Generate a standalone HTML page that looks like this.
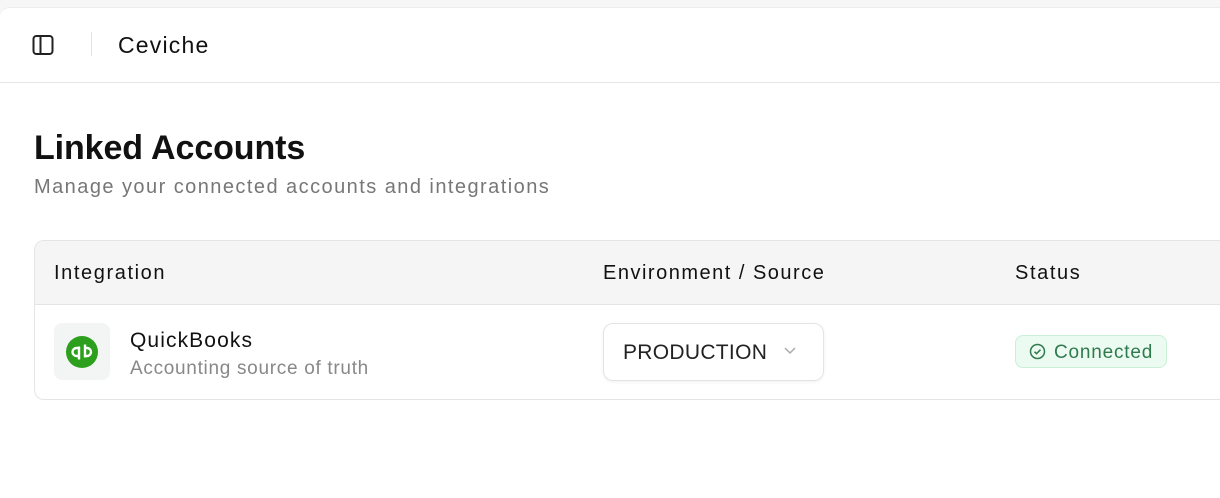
<!DOCTYPE html>
<html><head><style>
body{margin:0;width:1220px;height:484px;overflow:hidden;background:#f6f6f6;font-family:"Liberation Sans",sans-serif;color:#111}
.panel{position:absolute;left:0;top:7px;width:1240px;height:490px;background:#fff;border-top-left-radius:10px;border-top:1px solid #ececec}
.hdr{position:absolute;left:0;top:7px;width:1220px;height:75px;border-bottom:1px solid #e6e6e6}
.t{position:absolute;white-space:nowrap}
.table{position:absolute;left:34px;top:240px;width:1210px;height:158px;border:1px solid #e5e5e5;border-radius:10px;overflow:hidden}
.th{height:63px;background:#f5f5f5;border-bottom:1px solid #e5e5e5}
</style></head><body>
<div class="panel"></div>
<div class="hdr"></div>
<svg class="t" style="left:32px;top:34px" width="22" height="22" viewBox="0 0 22 22"><rect x="1.5" y="2" width="19" height="18" rx="3" fill="none" stroke="#222" stroke-width="2"/><line x1="8.5" y1="2" x2="8.5" y2="20" stroke="#222" stroke-width="2"/></svg>
<div class="t" style="left:91px;top:32px;width:1px;height:24px;background:#e3e3e3"></div>
<div class="t" style="left:118px;top:32px;font-size:23px;letter-spacing:1.2px;color:#111">Ceviche</div>
<div class="t" style="left:34px;top:129px;font-size:34px;font-weight:bold;letter-spacing:-0.1px">Linked Accounts</div>
<div class="t" style="left:34px;top:176px;font-size:20px;letter-spacing:1.45px;color:#777">Manage your connected accounts and integrations</div>
<div class="table"><div class="th"></div></div>
<div class="t" style="left:54px;top:262px;font-size:20px;letter-spacing:1.6px">Integration</div>
<div class="t" style="left:603px;top:262px;font-size:20px;letter-spacing:1.5px">Environment / Source</div>
<div class="t" style="left:1015px;top:262px;font-size:20px;letter-spacing:1.6px">Status</div>
<div class="t" style="left:54px;top:323px;width:56px;height:57px;background:#f3f4f4;border-radius:8px"></div>
<svg class="t" style="left:66px;top:336px" width="32" height="32" viewBox="0 0 32 32"><circle cx="16" cy="16" r="16" fill="#2ca01c"/><path d="M13 10.5v13M13 12h-2.5a4 4 0 0 0 0 8H12M19 8.5v13M19 12h2a4 4 0 0 1 0 8h-1.5" stroke="#fff" stroke-width="2.4" fill="none"/></svg>
<div class="t" style="left:130px;top:329px;font-size:21px;letter-spacing:1.1px">QuickBooks</div>
<div class="t" style="left:130px;top:358px;font-size:19px;letter-spacing:0.7px;color:#888">Accounting source of truth</div>
<div class="t" style="left:603px;top:323px;width:219px;height:56px;border:1px solid #e4e4e4;border-radius:10px;box-shadow:0 1px 3px rgba(0,0,0,.06)"></div>
<div class="t" style="left:623px;top:341px;font-size:21px;letter-spacing:0.3px;color:#222">PRODUCTION</div>
<svg class="t" style="left:783px;top:346px" width="14" height="10" viewBox="0 0 14 10"><path d="M2 2l5 5 5-5" stroke="#aaa" stroke-width="1.5" fill="none"/></svg>
<div class="t" style="left:1015px;top:335px;width:150px;height:31px;background:#ecfbf1;border:1px solid #c9f0d6;border-radius:8px"></div>
<svg class="t" style="left:1029px;top:343px" width="17" height="17" viewBox="0 0 17 17"><circle cx="8.5" cy="8.5" r="7" fill="none" stroke="#2f7a4e" stroke-width="1.5"/><path d="M5.5 8.7l2 2 4-4" stroke="#2f7a4e" stroke-width="1.5" fill="none"/></svg>
<div class="t" style="left:1054px;top:342px;font-size:19px;letter-spacing:0.8px;color:#2f7a4e">Connected</div>
</body></html>
